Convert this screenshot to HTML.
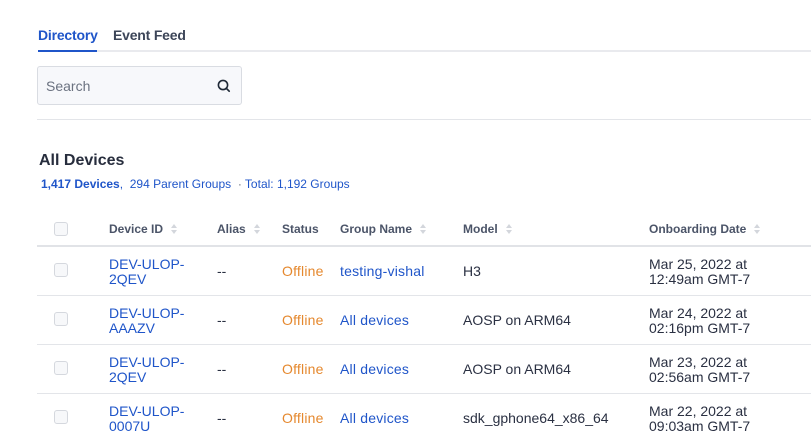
<!DOCTYPE html>
<html><head><meta charset="utf-8"><style>
*{margin:0;padding:0;box-sizing:border-box}
body{width:811px;height:430px;overflow:hidden;background:#fff;font-family:"Liberation Sans",sans-serif;position:relative;color:#2a3042}
.a{position:absolute;white-space:nowrap}
.tab{font-size:14px;font-weight:bold;top:27px;letter-spacing:-0.2px}
.hd{font-size:12px;font-weight:bold;color:#4b5468;top:222px}
.cb{position:absolute;left:54px;width:14px;height:14px;border:1px solid #d5d8de;border-radius:3px;background:#f7f8fa}
.two{font-size:14px;line-height:15px;white-space:nowrap;position:absolute}
.blue{color:#1f55c9}
.or{color:#e5882e}
.sp{letter-spacing:0.2px}
.line{position:absolute;left:37px;right:0;height:1px;background:#e3e5e9}
.sort{display:inline-block;vertical-align:middle;margin-left:8px;width:6px;height:10px;position:relative;top:-1px}
.sort:before,.sort:after{content:"";position:absolute;left:0;border-left:3px solid transparent;border-right:3px solid transparent}
.sort:before{top:0;border-bottom:4px solid #d3d6dc}
.sort:after{bottom:0;border-top:4px solid #d3d6dc}
</style></head><body>
<div class="a tab" style="left:38px;color:#1f55c9">Directory</div>
<div class="a tab" style="left:113px;color:#3c4558">Event Feed</div>
<div class="a" style="left:38px;right:0;top:50px;height:2px;background:#e9eaee"></div>
<div class="a" style="left:38px;width:59px;top:50px;height:2px;background:#1f55c9"></div>
<div class="a" style="left:37px;top:66px;width:205px;height:39px;border:1px solid #d9dce2;border-radius:3px;background:#f7f8fb"></div>
<div class="a" style="left:46px;top:78px;font-size:14px;color:#6b7280">Search</div>
<svg class="a" style="left:216px;top:78px" width="16" height="16" viewBox="0 0 16 16"><circle cx="7" cy="7" r="4.6" fill="none" stroke="#1f2937" stroke-width="1.6"/><path d="M10.3 10.3L13.2 13.2" stroke="#1f2937" stroke-width="1.7" stroke-linecap="round"/></svg>
<div class="a" style="left:37px;right:0;top:119px;height:1px;background:#e3e5e9"></div>
<div class="a" style="left:39px;top:152px;font-size:16px;font-weight:bold;color:#272d3d">All Devices</div>
<div class="a" style="left:41px;top:177px;font-size:12px;color:#1f55c9"><b>1,417 Devices</b>,&nbsp; 294 Parent Groups &nbsp;<span style="color:#6b7280">·</span> Total: 1,192 Groups</div>

<div class="cb" style="top:222px"></div>
<div class="a hd" style="left:109px">Device ID<span class="sort"></span></div>
<div class="a hd" style="left:217px">Alias<span class="sort"></span></div>
<div class="a hd" style="left:282px">Status</div>
<div class="a hd" style="left:340px">Group Name<span class="sort"></span></div>
<div class="a hd" style="left:463px">Model<span class="sort"></span></div>
<div class="a hd" style="left:649px">Onboarding Date<span class="sort"></span></div>
<div class="line" style="top:245px;height:2px;background:#e1e3e7"></div>

<div class="cb" style="top:263px"></div>
<div class="two blue" style="left:109px;top:257px">DEV-ULOP-<br>2QEV</div>
<div class="two" style="left:217px;top:264px">--</div>
<div class="two or sp" style="left:282px;top:264px">Offline</div>
<div class="two blue sp" style="left:340px;top:264px">testing-vishal</div>
<div class="two" style="left:463px;top:264px">H3</div>
<div class="two" style="left:649px;top:257px">Mar 25, 2022 at<br>12:49am GMT-7</div>
<div class="line" style="top:295px"></div>

<div class="cb" style="top:312px"></div>
<div class="two blue" style="left:109px;top:306px">DEV-ULOP-<br>AAAZV</div>
<div class="two" style="left:217px;top:313px">--</div>
<div class="two or sp" style="left:282px;top:313px">Offline</div>
<div class="two blue sp" style="left:340px;top:313px">All devices</div>
<div class="two" style="left:463px;top:313px">AOSP on ARM64</div>
<div class="two" style="left:649px;top:306px">Mar 24, 2022 at<br>02:16pm GMT-7</div>
<div class="line" style="top:344px"></div>

<div class="cb" style="top:361px"></div>
<div class="two blue" style="left:109px;top:355px">DEV-ULOP-<br>2QEV</div>
<div class="two" style="left:217px;top:362px">--</div>
<div class="two or sp" style="left:282px;top:362px">Offline</div>
<div class="two blue sp" style="left:340px;top:362px">All devices</div>
<div class="two" style="left:463px;top:362px">AOSP on ARM64</div>
<div class="two" style="left:649px;top:355px">Mar 23, 2022 at<br>02:56am GMT-7</div>
<div class="line" style="top:393px"></div>

<div class="cb" style="top:410px"></div>
<div class="two blue" style="left:109px;top:404px">DEV-ULOP-<br>0007U</div>
<div class="two" style="left:217px;top:411px">--</div>
<div class="two or sp" style="left:282px;top:411px">Offline</div>
<div class="two blue sp" style="left:340px;top:411px">All devices</div>
<div class="two" style="left:463px;top:411px">sdk_gphone64_x86_64</div>
<div class="two" style="left:649px;top:404px">Mar 22, 2022 at<br>09:03am GMT-7</div>
</body></html>
